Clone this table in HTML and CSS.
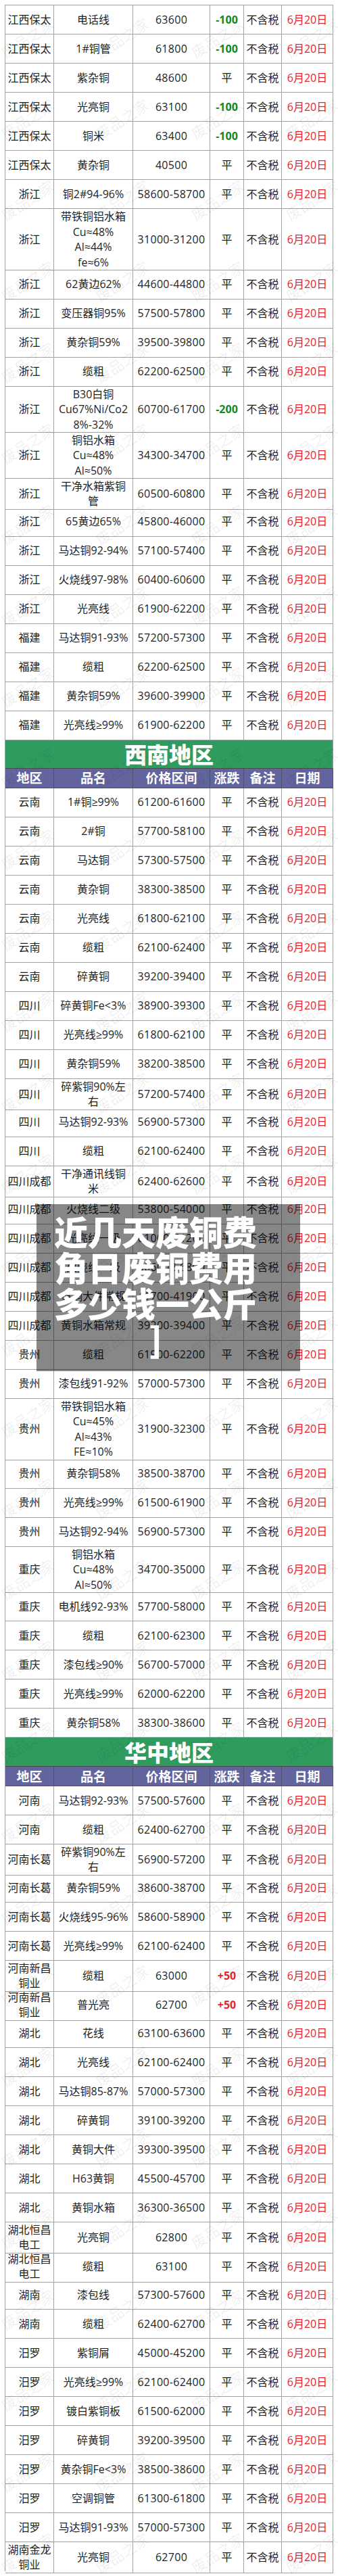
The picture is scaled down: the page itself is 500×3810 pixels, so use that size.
FILE: index.html
```html
<!DOCTYPE html>
<html lang="zh-CN">
<head>
<meta charset="utf-8">
<title>废铜价格</title>
<link rel="stylesheet" href="styles.css">
</head>
<body>
<div class="page">
  <div class="tbl">
    <div class="r"><div>江西保太</div><div>电话线</div><div class="p">63600</div><div class="g">-100</div><div>不含税</div><div class="t">6月20日</div></div>
    <div class="r"><div>江西保太</div><div>1#铜管</div><div class="p">61800</div><div class="g">-100</div><div>不含税</div><div class="t">6月20日</div></div>
    <div class="r"><div>江西保太</div><div>紫杂铜</div><div class="p">48600</div><div>平</div><div>不含税</div><div class="t">6月20日</div></div>
    <div class="r"><div>江西保太</div><div>光亮铜</div><div class="p">63100</div><div class="g">-100</div><div>不含税</div><div class="t">6月20日</div></div>
    <div class="r"><div>江西保太</div><div>铜米</div><div class="p">63400</div><div class="g">-100</div><div>不含税</div><div class="t">6月20日</div></div>
    <div class="r"><div>江西保太</div><div>黄杂铜</div><div class="p">40500</div><div>平</div><div>不含税</div><div class="t">6月20日</div></div>
    <div class="r"><div>浙江</div><div>铜2#94-96%</div><div class="p">58600-58700</div><div>平</div><div>不含税</div><div class="t">6月20日</div></div>
    <div class="r r4"><div>浙江</div><div>带铁铜铝水箱<br>Cu≈48%<br>Al≈44%<br>fe≈6%</div><div class="p">31000-31200</div><div>平</div><div>不含税</div><div class="t">6月20日</div></div>
    <div class="r"><div>浙江</div><div>62黄边62%</div><div class="p">44600-44800</div><div>平</div><div>不含税</div><div class="t">6月20日</div></div>
    <div class="r"><div>浙江</div><div>变压器铜95%</div><div class="p">57500-57800</div><div>平</div><div>不含税</div><div class="t">6月20日</div></div>
    <div class="r"><div>浙江</div><div>黄杂铜59%</div><div class="p">39500-39800</div><div>平</div><div>不含税</div><div class="t">6月20日</div></div>
    <div class="r"><div>浙江</div><div>缆粗</div><div class="p">62200-62500</div><div>平</div><div>不含税</div><div class="t">6月20日</div></div>
    <div class="r r3"><div>浙江</div><div>B30白铜<br>Cu67%Ni/Co2<br>8%-32%</div><div class="p">60700-61700</div><div class="g">-200</div><div>不含税</div><div class="t">6月20日</div></div>
    <div class="r r3"><div>浙江</div><div>铜铝水箱<br>Cu≈48%<br>Al≈50%</div><div class="p">34300-34700</div><div>平</div><div>不含税</div><div class="t">6月20日</div></div>
    <div class="r"><div>浙江</div><div>干净水箱紫铜<br>管</div><div class="p">60500-60800</div><div>平</div><div>不含税</div><div class="t">6月20日</div></div>
    <div class="r"><div>浙江</div><div>65黄边65%</div><div class="p">45800-46000</div><div>平</div><div>不含税</div><div class="t">6月20日</div></div>
    <div class="r"><div>浙江</div><div>马达铜92-94%</div><div class="p">57100-57400</div><div>平</div><div>不含税</div><div class="t">6月20日</div></div>
    <div class="r"><div>浙江</div><div>火烧线97-98%</div><div class="p">60400-60600</div><div>平</div><div>不含税</div><div class="t">6月20日</div></div>
    <div class="r"><div>浙江</div><div>光亮线</div><div class="p">61900-62200</div><div>平</div><div>不含税</div><div class="t">6月20日</div></div>
    <div class="r"><div>福建</div><div>马达铜91-93%</div><div class="p">57200-57300</div><div>平</div><div>不含税</div><div class="t">6月20日</div></div>
    <div class="r"><div>福建</div><div>缆粗</div><div class="p">62200-62500</div><div>平</div><div>不含税</div><div class="t">6月20日</div></div>
    <div class="r"><div>福建</div><div>黄杂铜59%</div><div class="p">39600-39900</div><div>平</div><div>不含税</div><div class="t">6月20日</div></div>
    <div class="r"><div>福建</div><div>光亮线≥99%</div><div class="p">61900-62200</div><div>平</div><div>不含税</div><div class="t">6月20日</div></div>

    <div class="ban">西南地区</div>
    <div class="r hd"><div>地区</div><div>品名</div><div>价格区间</div><div>涨跌</div><div>备注</div><div>日期</div></div>
    <div class="r"><div>云南</div><div>1#铜≥99%</div><div class="p">61200-61600</div><div>平</div><div>不含税</div><div class="t">6月20日</div></div>
    <div class="r"><div>云南</div><div>2#铜</div><div class="p">57700-58100</div><div>平</div><div>不含税</div><div class="t">6月20日</div></div>
    <div class="r"><div>云南</div><div>马达铜</div><div class="p">57300-57500</div><div>平</div><div>不含税</div><div class="t">6月20日</div></div>
    <div class="r"><div>云南</div><div>黄杂铜</div><div class="p">38300-38500</div><div>平</div><div>不含税</div><div class="t">6月20日</div></div>
    <div class="r"><div>云南</div><div>光亮线</div><div class="p">61800-62100</div><div>平</div><div>不含税</div><div class="t">6月20日</div></div>
    <div class="r"><div>云南</div><div>缆粗</div><div class="p">62100-62400</div><div>平</div><div>不含税</div><div class="t">6月20日</div></div>
    <div class="r"><div>云南</div><div>碎黄铜</div><div class="p">39200-39400</div><div>平</div><div>不含税</div><div class="t">6月20日</div></div>
    <div class="r"><div>四川</div><div>碎黄铜Fe&lt;3%</div><div class="p">38900-39300</div><div>平</div><div>不含税</div><div class="t">6月20日</div></div>
    <div class="r"><div>四川</div><div>光亮线≥99%</div><div class="p">61800-62100</div><div>平</div><div>不含税</div><div class="t">6月20日</div></div>
    <div class="r"><div>四川</div><div>黄杂铜59%</div><div class="p">38200-38500</div><div>平</div><div>不含税</div><div class="t">6月20日</div></div>
    <div class="r"><div>四川</div><div>碎紫铜90%左<br>右</div><div class="p">57200-57400</div><div>平</div><div>不含税</div><div class="t">6月20日</div></div>
    <div class="r"><div>四川</div><div>马达铜92-93%</div><div class="p">56900-57300</div><div>平</div><div>不含税</div><div class="t">6月20日</div></div>
    <div class="r"><div>四川</div><div>缆粗</div><div class="p">62100-62400</div><div>平</div><div>不含税</div><div class="t">6月20日</div></div>
    <div class="r"><div>四川成都</div><div>干净通讯线铜<br>米</div><div class="p">62400-62600</div><div>平</div><div>不含税</div><div class="t">6月20日</div></div>
    <div class="r"><div>四川成都</div><div>火烧线二级</div><div class="p">53800-54000</div><div>平</div><div>不含税</div><div class="t">6月20日</div></div>
    <div class="r"><div>四川成都</div><div>光亮线一级</div><div class="p">61000-61200</div><div>平</div><div>不含税</div><div class="t">6月20日</div></div>
    <div class="r"><div>四川成都</div><div>火烧线一级</div><div class="p">56600-56800</div><div>平</div><div>不含税</div><div class="t">6月20日</div></div>
    <div class="r"><div>四川成都</div><div>黄铜大件常规</div><div class="p">41700-41900</div><div>平</div><div>不含税</div><div class="t">6月20日</div></div>
    <div class="r"><div>四川成都</div><div>黄铜水箱常规</div><div class="p">39200-39400</div><div>平</div><div>不含税</div><div class="t">6月20日</div></div>
    <div class="r"><div>贵州</div><div>缆粗</div><div class="p">61900-62200</div><div>平</div><div>不含税</div><div class="t">6月20日</div></div>
    <div class="r"><div>贵州</div><div>漆包线91-92%</div><div class="p">57000-57300</div><div>平</div><div>不含税</div><div class="t">6月20日</div></div>
    <div class="r r4b"><div>贵州</div><div>带铁铜铝水箱<br>Cu≈45%<br>Al≈43%<br>FE≈10%</div><div class="p">31900-32300</div><div>平</div><div>不含税</div><div class="t">6月20日</div></div>
    <div class="r"><div>贵州</div><div>黄杂铜58%</div><div class="p">38500-38700</div><div>平</div><div>不含税</div><div class="t">6月20日</div></div>
    <div class="r"><div>贵州</div><div>光亮线≥99%</div><div class="p">61500-61900</div><div>平</div><div>不含税</div><div class="t">6月20日</div></div>
    <div class="r"><div>贵州</div><div>马达铜92-94%</div><div class="p">56900-57300</div><div>平</div><div>不含税</div><div class="t">6月20日</div></div>
    <div class="r r3b"><div>重庆</div><div>铜铝水箱<br>Cu≈48%<br>Al≈50%</div><div class="p">34700-35000</div><div>平</div><div>不含税</div><div class="t">6月20日</div></div>
    <div class="r"><div>重庆</div><div>电机线92-93%</div><div class="p">57700-58000</div><div>平</div><div>不含税</div><div class="t">6月20日</div></div>
    <div class="r"><div>重庆</div><div>缆粗</div><div class="p">62100-62300</div><div>平</div><div>不含税</div><div class="t">6月20日</div></div>
    <div class="r"><div>重庆</div><div>漆包线≥90%</div><div class="p">56700-57000</div><div>平</div><div>不含税</div><div class="t">6月20日</div></div>
    <div class="r"><div>重庆</div><div>光亮线≥99%</div><div class="p">62000-62200</div><div>平</div><div>不含税</div><div class="t">6月20日</div></div>
    <div class="r"><div>重庆</div><div>黄杂铜58%</div><div class="p">38300-38600</div><div>平</div><div>不含税</div><div class="t">6月20日</div></div>

    <div class="ban ban2">华中地区</div>
    <div class="r hd hd2"><div>地区</div><div>品名</div><div>价格区间</div><div>涨跌</div><div>备注</div><div>日期</div></div>
    <div class="r"><div>河南</div><div>马达铜92-93%</div><div class="p">57500-57600</div><div>平</div><div>不含税</div><div class="t">6月20日</div></div>
    <div class="r"><div>河南</div><div>缆粗</div><div class="p">62400-62700</div><div>平</div><div>不含税</div><div class="t">6月20日</div></div>
    <div class="r"><div>河南长葛</div><div>碎紫铜90%左<br>右</div><div class="p">56900-57200</div><div>平</div><div>不含税</div><div class="t">6月20日</div></div>
    <div class="r"><div>河南长葛</div><div>黄杂铜59%</div><div class="p">38600-38700</div><div>平</div><div>不含税</div><div class="t">6月20日</div></div>
    <div class="r"><div>河南长葛</div><div>火烧线95-96%</div><div class="p">58600-58900</div><div>平</div><div>不含税</div><div class="t">6月20日</div></div>
    <div class="r"><div>河南长葛</div><div>光亮线≥99%</div><div class="p">62100-62400</div><div>平</div><div>不含税</div><div class="t">6月20日</div></div>
    <div class="r"><div>河南新昌<br>铜业</div><div>缆粗</div><div class="p">63000</div><div class="up">+50</div><div>不含税</div><div class="t">6月20日</div></div>
    <div class="r"><div>河南新昌<br>铜业</div><div>普光亮</div><div class="p">62700</div><div class="up">+50</div><div>不含税</div><div class="t">6月20日</div></div>
    <div class="r"><div>湖北</div><div>花线</div><div class="p">63100-63600</div><div>平</div><div>不含税</div><div class="t">6月20日</div></div>
    <div class="r"><div>湖北</div><div>光亮线</div><div class="p">62100-62400</div><div>平</div><div>不含税</div><div class="t">6月20日</div></div>
    <div class="r"><div>湖北</div><div>马达铜85-87%</div><div class="p">57000-57300</div><div>平</div><div>不含税</div><div class="t">6月20日</div></div>
    <div class="r"><div>湖北</div><div>碎黄铜</div><div class="p">39100-39200</div><div>平</div><div>不含税</div><div class="t">6月20日</div></div>
    <div class="r"><div>湖北</div><div>黄铜大件</div><div class="p">39300-39500</div><div>平</div><div>不含税</div><div class="t">6月20日</div></div>
    <div class="r"><div>湖北</div><div>H63黄铜</div><div class="p">45500-45700</div><div>平</div><div>不含税</div><div class="t">6月20日</div></div>
    <div class="r"><div>湖北</div><div>黄铜水箱</div><div class="p">36300-36500</div><div>平</div><div>不含税</div><div class="t">6月20日</div></div>
    <div class="r"><div>湖北恒昌<br>电工</div><div>光亮铜</div><div class="p">62800</div><div>平</div><div>不含税</div><div class="t">6月20日</div></div>
    <div class="r"><div>湖北恒昌<br>电工</div><div>缆粗</div><div class="p">63100</div><div>平</div><div>不含税</div><div class="t">6月20日</div></div>
    <div class="r"><div>湖南</div><div>漆包线</div><div class="p">57300-57600</div><div>平</div><div>不含税</div><div class="t">6月20日</div></div>
    <div class="r"><div>湖南</div><div>缆粗</div><div class="p">62400-62700</div><div>平</div><div>不含税</div><div class="t">6月20日</div></div>
    <div class="r"><div>汨罗</div><div>紫铜屑</div><div class="p">45000-45200</div><div>平</div><div>不含税</div><div class="t">6月20日</div></div>
    <div class="r"><div>汨罗</div><div>光亮线≥99%</div><div class="p">62100-62400</div><div>平</div><div>不含税</div><div class="t">6月20日</div></div>
    <div class="r"><div>汨罗</div><div>镀白紫铜板</div><div class="p">61500-62000</div><div>平</div><div>不含税</div><div class="t">6月20日</div></div>
    <div class="r"><div>汨罗</div><div>碎黄铜</div><div class="p">39200-39500</div><div>平</div><div>不含税</div><div class="t">6月20日</div></div>
    <div class="r"><div>汨罗</div><div>黄杂铜Fe&lt;3%</div><div class="p">38500-38600</div><div>平</div><div>不含税</div><div class="t">6月20日</div></div>
    <div class="r"><div>汨罗</div><div>空调铜管</div><div class="p">61300-61800</div><div>平</div><div>不含税</div><div class="t">6月20日</div></div>
    <div class="r"><div>汨罗</div><div>马达铜91-93%</div><div class="p">57000-57300</div><div>平</div><div>不含税</div><div class="t">6月20日</div></div>
    <div class="r"><div>湖南金龙<br>铜业</div><div>光亮铜</div><div class="p">62700</div><div>平</div><div>不含税</div><div class="t">6月20日</div></div>
  </div>

  <div class="wm" aria-hidden="true">
    <span>废品之家</span><span>废品之家</span><span>废品之家</span><span>废品之家</span>
    <span>废品之家</span><span>废品之家</span><span>废品之家</span><span>废品之家</span>
    <span>废品之家</span><span>废品之家</span><span>废品之家</span><span>废品之家</span>
    <span>废品之家</span><span>废品之家</span><span>废品之家</span><span>废品之家</span>
    <span>废品之家</span><span>废品之家</span><span>废品之家</span><span>废品之家</span>
    <span>废品之家</span><span>废品之家</span><span>废品之家</span><span>废品之家</span>
    <span>废品之家</span><span>废品之家</span><span>废品之家</span><span>废品之家</span>
    <span>废品之家</span><span>废品之家</span><span>废品之家</span><span>废品之家</span>
    <span>废品之家</span><span>废品之家</span><span>废品之家</span><span>废品之家</span>
    <span>废品之家</span><span>废品之家</span><span>废品之家</span><span>废品之家</span>
    <span>废品之家</span><span>废品之家</span><span>废品之家</span><span>废品之家</span>
    <span>废品之家</span><span>废品之家</span><span>废品之家</span><span>废品之家</span>
    <span>废品之家</span><span>废品之家</span><span>废品之家</span><span>废品之家</span>
    <span>废品之家</span><span>废品之家</span><span>废品之家</span><span>废品之家</span>
    <span>废品之家</span><span>废品之家</span><span>废品之家</span><span>废品之家</span>
    <span>废品之家</span><span>废品之家</span><span>废品之家</span><span>废品之家</span>
    <span>废品之家</span><span>废品之家</span><span>废品之家</span><span>废品之家</span>
    <span>废品之家</span><span>废品之家</span><span>废品之家</span><span>废品之家</span>
    <span>废品之家</span><span>废品之家</span><span>废品之家</span><span>废品之家</span>
    <span>废品之家</span><span>废品之家</span><span>废品之家</span><span>废品之家</span>
    <span>废品之家</span><span>废品之家</span><span>废品之家</span><span>废品之家</span>
    <span>废品之家</span><span>废品之家</span><span>废品之家</span><span>废品之家</span>
    <span>废品之家</span><span>废品之家</span><span>废品之家</span><span>废品之家</span>
    <span>废品之家</span><span>废品之家</span><span>废品之家</span><span>废品之家</span>
    <span>废品之家</span><span>废品之家</span><span>废品之家</span><span>废品之家</span>
    <span>废品之家</span><span>废品之家</span><span>废品之家</span><span>废品之家</span>
    <span>废品之家</span><span>废品之家</span><span>废品之家</span><span>废品之家</span>
    <span>废品之家</span><span>废品之家</span><span>废品之家</span><span>废品之家</span>
    <span>废品之家</span><span>废品之家</span><span>废品之家</span><span>废品之家</span>
    <span>废品之家</span><span>废品之家</span><span>废品之家</span><span>废品之家</span>
    <span>废品之家</span><span>废品之家</span><span>废品之家</span><span>废品之家</span>
    <span>废品之家</span><span>废品之家</span><span>废品之家</span><span>废品之家</span>
  </div>

  <div class="ov">近几天废铜费<br>角日废铜费用<br>多少钱一公斤<br>]</div>
</div>
</body>
</html>
```
FILE: styles.css
```css
html, body {
  margin: 0;
  padding: 0;
  background: #ffffff;
}

.page {
  position: relative;
  width: 500px;
  height: 3810px;
  overflow: hidden;
  background: #ffffff;
  font-family: "Open Sans", "Noto Sans CJK SC", sans-serif;
  color: #1e1e1e;
}

.tbl {
  margin: 7px 0 0 7px;
  width: 486px;
  box-sizing: border-box;
  border-left: 1px solid #a2a2a2;
  border-top: 1px solid #a2a2a2;
}

.r {
  display: grid;
  grid-template-columns: 72px 117px 114px 50px 56px 76px;
  height: 43px;
}

.r > div {
  border-right: 1px solid #a2a2a2;
  border-bottom: 1px solid #a2a2a2;
  display: flex;
  align-items: center;
  justify-content: center;
  text-align: center;
  font-size: 16px;
  line-height: 22.5px;
  white-space: nowrap;
  overflow: visible;
}

.r4 { height: 90.5px; }
.r4b { height: 90px; }
.r3 { height: 68px; }
.r3b { height: 67.6px; }

.p { letter-spacing: 0.3px; }

.g {
  color: #17891b;
  font-weight: 700;
}

.up {
  color: #e3262b;
  font-weight: 700;
}

.t { color: #e3262b; }

.ban {
  height: 42px;
  box-sizing: border-box;
  background: #2f9b5f;
  color: #ffffff;
  font-family: "Noto Sans CJK SC", sans-serif;
  font-size: 33px;
  font-weight: 900;
  display: flex;
  align-items: center;
  justify-content: center;
  border-right: 1px solid #a2a2a2;
  border-bottom: 1px solid #4a4a4a;
}

.ban2 { height: 43px; }

.hd { height: 29px; }
.hd2 { height: 28.7px; }

.hd > div {
  background: #62659d;
  color: #ffffff;
  font-family: "Noto Sans CJK SC", sans-serif;
  font-weight: 700;
  font-size: 19px;
  border-right-color: #4f4f6f;
  border-bottom-color: #4f4f6f;
}

.wm {
  position: absolute;
  left: -30px;
  top: -5px;
  display: grid;
  grid-template-columns: repeat(4, 140.3px);
  grid-auto-rows: 120px;
  pointer-events: none;
}

.wm span {
  display: flex;
  align-items: center;
  justify-content: center;
  transform: rotate(-33deg);
  font-family: "Noto Sans CJK SC", sans-serif;
  font-size: 22px;
  color: rgba(0, 0, 0, 0.07);
  white-space: nowrap;
}

.ov {
  position: absolute;
  left: 54px;
  top: 1781px;
  width: 390px;
  height: 247px;
  box-sizing: border-box;
  padding: 13px 38px 0 0;
  background: rgba(0, 0, 0, 0.47);
  color: #ffffff;
  font-family: "Noto Sans CJK SC", sans-serif;
  font-size: 50px;
  font-weight: 900;
  line-height: 53px;
  text-align: center;
  white-space: nowrap;
}
```
